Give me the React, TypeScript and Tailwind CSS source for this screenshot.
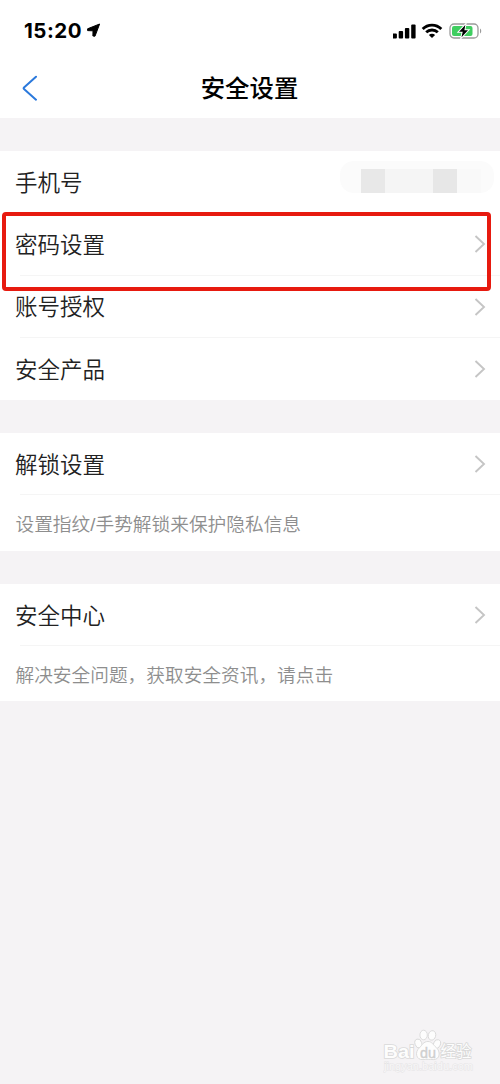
import type { ReactNode } from "react";

const fontCls = "font-['Liberation_Sans','Noto_Sans_CJK_SC',sans-serif]";

function StatusBar() {
  return (
    <div className="flex h-[60px] items-center justify-between pl-[24px] pr-[18px]">
      <div className="flex items-center">
        <span className="w-[60px] whitespace-nowrap pt-[2px] font-[Inter,sans-serif] text-[20.5px] font-bold leading-none tracking-[0.5px] text-black">
          15:20
        </span>
        <svg width="15" height="15" viewBox="0 0 15 15" className="ml-[2px] mt-px">
          <path d="M13.6 1 L9 13.2 L6.9 13 L7 7.8 L1.6 7.6 L1.6 5.8 Z" fill="#000" stroke="#000" strokeLinejoin="round" />
        </svg>
      </div>
      <div className="flex items-center pt-px">
        <svg width="24" height="16" viewBox="0 0 24 16">
          <rect x="-0.5" y="10.5" width="4.4" height="5" rx="1" />
          <rect x="5.7" y="8" width="4.4" height="7.5" rx="1" />
          <rect x="11.9" y="5" width="4.4" height="10.5" rx="1" />
          <rect x="18.2" y="1.5" width="4.4" height="14" rx="1" />
        </svg>
        <svg width="22" height="16" viewBox="0 0 22 16" className="ml-[4px]">
          <g fill="none" stroke="#000" strokeWidth="2.8">
            <path d="M1.7 6 C6.8 0.7 15.2 0.7 20.3 6" />
            <path d="M5.2 9.3 C8.3 6.2 13.7 6.2 16.8 9.3" />
          </g>
          <path d="M11 15 L7.9 11.9 C9.5 10.3 12.5 10.3 14.1 11.9 Z" />
        </svg>
        <svg width="33" height="18" viewBox="0 0 33 18" className="ml-[6px]">
          <rect x="1" y="2" width="28" height="14" rx="4" fill="none" stroke="#9b9b9b" strokeWidth="1.3" />
          <rect x="3" y="4" width="20.5" height="10" rx="2" fill="#3fce60" />
          <path d="M31 6.5 C32.7 7.5 32.7 10.5 31 11.5 Z" fill="#9b9b9b" />
          <path
            d="M16.3 3 L10 9.8 H13.7 L12.5 15.2 L19 8.2 H15.4 Z"
            stroke="#fff"
            strokeWidth="2"
            paintOrder="stroke"
          />
        </svg>
      </div>
    </div>
  );
}

function NavBar() {
  return (
    <div className="grid h-[58px] grid-cols-[1fr_auto_1fr] items-center">
      <svg width="16" height="26" viewBox="0 0 16 26" className="-mt-[2px] ml-[22px]">
        <path
          d="M14 1.7 L2 12.6 Q1.2 13.3 2 14 L14 24.7"
          fill="none"
          stroke="#2b79dc"
          strokeWidth="2"
          strokeLinecap="round"
        />
      </svg>
      <h1 className="-ml-px pt-px text-[24.4px] font-medium leading-none text-black">安全设置</h1>
    </div>
  );
}

function Chevron() {
  return (
    <svg width="12" height="18" viewBox="0 0 12 18">
      <path d="M1.5 1 L10 9 L1.5 17" fill="none" stroke="#c5c5c5" strokeWidth="1.9" />
    </svg>
  );
}

function Row({ label, children = <Chevron /> }: { label: string; children?: ReactNode }) {
  return (
    <div className="flex h-[62.25px] items-center justify-between pl-[15px] pr-[14px]">
      <span className="pt-[4px] text-[22.5px] font-[350] leading-none text-[#222]">{label}</span>
      {children}
    </div>
  );
}

function Divider() {
  return <div className="-mt-px ml-[20px] h-px bg-[#f5f5f5]" />;
}

function Hint({ children }: { children: string }) {
  return (
    <p className="flex h-[55px] items-center whitespace-nowrap pl-[15.5px] pt-[6px] text-[18.7px] font-[350] leading-none text-[#8e8e8e]">
      {children}
    </p>
  );
}

// Mosaic over the phone number
function MaskedPhone() {
  return (
    <div className="-mr-[8px] -mt-[11px] flex h-[32px] w-[154px] items-end overflow-hidden rounded-[14px] bg-[#fbfbfb]">
      <div className="ml-[21px] h-[24px] w-[24px] bg-[#e8e8e8]" />
      <div className="h-[24px] w-[48px] bg-[#f5f5f5]" />
      <div className="h-[24px] w-[24px] bg-[#e7e7e7]" />
      <div className="h-[24px] w-[24px] bg-[#f9f9f9]" />
    </div>
  );
}

function Watermark() {
  return (
    <div className="absolute left-[383px] top-[1025px] w-[94px]">
      <svg width="94" height="54" viewBox="0 0 94 54" fill="#fdfdfd" stroke="#d9d9d9" strokeWidth="0.9">
        <ellipse cx="35.4" cy="18.5" rx="3.4" ry="4.6" transform="rotate(-18 35.4 18.5)" />
        <ellipse cx="40.6" cy="10" rx="3.7" ry="4.8" />
        <ellipse cx="49" cy="10.4" rx="3.7" ry="4.8" transform="rotate(14 49 10.4)" />
        <ellipse cx="54" cy="19" rx="3.4" ry="4.5" transform="rotate(20 54 19)" />
        <path d="M45 16.5 C49 16.5 50.3 20 53.2 22.5 C57.8 26.3 57.2 34.9 50.2 34.6 C46.6 34.3 44 34.3 40 34.6 C32.8 35.1 31.7 27 36.2 23 C39.2 20.3 40.2 16.5 45 16.5 Z" />
        <g paintOrder="stroke" strokeWidth="1.6" fontFamily="Liberation Sans, Noto Sans CJK SC, sans-serif">
          <text x="0.5" y="32.7" fontSize="19" fontWeight="700" textLength="31" lengthAdjust="spacingAndGlyphs">
            Bai
          </text>
          <text x="37" y="32.5" fontSize="15" fill="#cfcfcf" stroke="#cfcfcf" strokeWidth="0.4" textLength="16" lengthAdjust="spacingAndGlyphs">
            du
          </text>
          <text x="57.5" y="31.5" fontSize="16" fontWeight="400" textLength="31" lengthAdjust="spacingAndGlyphs">
            经验
          </text>
          <text x="1" y="45" fontSize="11" fill="#f8f7f8" stroke="#e5e4e5" strokeWidth="1" textLength="89" lengthAdjust="spacingAndGlyphs">
            jingyan.baidu.com
          </text>
        </g>
      </svg>
    </div>
  );
}

export default function App() {
  return (
    <div className={`relative h-[1084px] w-[500px] overflow-hidden bg-[#f5f3f5] ${fontCls}`}>
      <header className="bg-white">
        <StatusBar />
        <NavBar />
      </header>

      <main className="mt-[33px] flex flex-col gap-[33px]">
        <section className="h-[249px] bg-white">
          <Row label="手机号">
            <MaskedPhone />
          </Row>
          <Row label="密码设置" />
          <Divider />
          <Row label="账号授权" />
          <Divider />
          <Row label="安全产品" />
        </section>

        <section className="h-[118px] bg-white">
          <Row label="解锁设置" />
          <Divider />
          <Hint>设置指纹/手势解锁来保护隐私信息</Hint>
        </section>

        <section className="h-[117px] bg-white">
          <Row label="安全中心" />
          <Divider />
          <Hint>解决安全问题，获取安全资讯，请点击</Hint>
        </section>
      </main>

      <div className="absolute left-[2px] top-[212px] h-[79px] w-[489px] rounded-[4px] border-4 border-[#e71a0f]" />
      <Watermark />
    </div>
  );
}
